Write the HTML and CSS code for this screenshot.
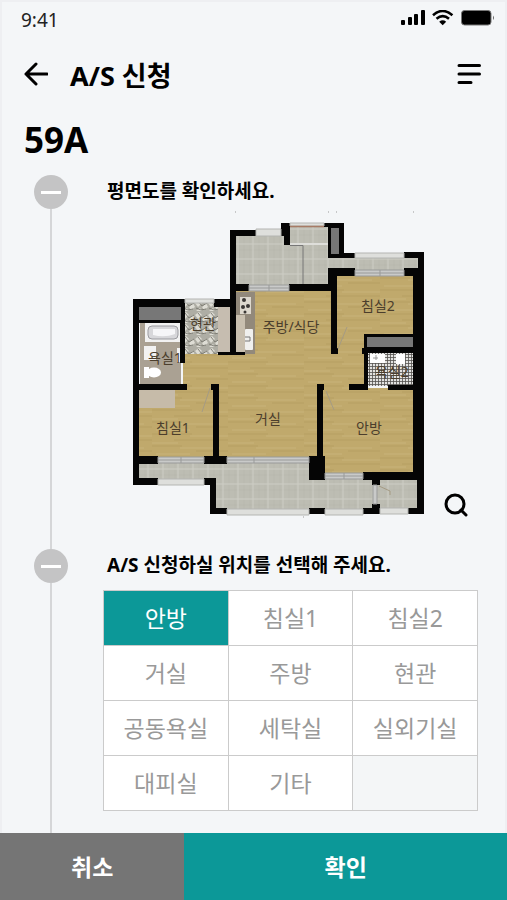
FILE: index.html
```html
<!DOCTYPE html>
<html lang="ko">
<head>
   <meta charset="UTF-8">
   <meta name="viewport" content="width=device-width, initial-scale=1">
   <title>A/S 신청</title>
   <link rel="stylesheet" href="styles.css">
</head>
<body>
   <div class="status">
      <span>9:41</span>
      <svg width="94" height="16" viewBox="401 10 94 16" aria-hidden="true">
         <rect x="401" y="20" width="4" height="5" rx="1"/>
         <rect x="408" y="17" width="4" height="8" rx="1"/>
         <rect x="414" y="14" width="4" height="11" rx="1"/>
         <rect x="421" y="10" width="4" height="15" rx="1"/>
         <g fill="none" stroke="#000" stroke-width="2.6">
            <path d="M433 15.2Q442.5 6.8 452.4 15.2"/>
            <path d="M436.5 18.8Q442.7 13.6 449 18.8"/>
         </g>
         <path d="M439.2 21.7Q442.7 19 446.2 21.7L442.7 25.2Z"/>
         <rect x="461.5" y="10.5" width="29.5" height="14.5" rx="3" fill="#000" stroke="#777"/>
         <path d="M493 15.5q2 2.3 0 4.6z" fill="#666"/>
      </svg>
   </div>

   <header>
      <a href="#" class="back" aria-label="뒤로">
         <svg width="24" height="24" viewBox="0 0 24 24"><path d="M23 12H2M12 2L2 12l10 10"/></svg>
      </a>
      <h1>A/S 신청</h1>
      <button type="button" class="menu" aria-label="메뉴">
         <svg width="24" height="24" viewBox="0 0 24 24"><path d="M2 3.5h20.5M2 12h20.5M2 20.5h12"/></svg>
      </button>
   </header>

   <main>
      <p class="type">59A</p>

      <section class="step">
         <div class="line"><button type="button" class="fold" aria-label="접기"></button></div>
         <div class="content">
            <h2>평면도를 확인하세요.</h2>
            <div class="plan">
               <svg viewBox="103 209 375 320" role="img" aria-label="59A 평면도">
                  <defs>
                     <pattern id="wood" width="76" height="24" patternUnits="userSpaceOnUse">
                        <rect width="76" height="24" fill="#c0a96c"/>
                        <path d="M0 2h40M22 8h54M0 14h30M44 19h32" stroke="#b7a062" stroke-width="1"/>
                        <path d="M38 4h38M0 11h26M28 16h40M4 22h34" stroke="#c9b47a" stroke-width="1"/>
                     </pattern>
                     <pattern id="tile" width="15" height="15" patternUnits="userSpaceOnUse">
                        <rect width="15" height="15" fill="#bdbdb3"/>
                        <path d="M4 0v15M10 0v15M0 10h15" stroke="#b3b4aa" stroke-width=".6"/>
                        <path d="M0 4h15M13 0v15" stroke="#cdcdc5" stroke-width="1"/>
                     </pattern>
                     <pattern id="marble" width="13" height="12" patternUnits="userSpaceOnUse">
                        <rect width="13" height="12" fill="#aeada4"/>
                        <path d="M0 3l4-3 3 3-4 4zM7 7l4-4 2 4-4 3zM1 11l4-3 2 3z" fill="#deddd5"/>
                        <path d="M3 1l4 5 5-3M1 8l5 2 5-1" fill="none" stroke="#77766e" stroke-width=".9"/>
                     </pattern>
                     <pattern id="mosaic" width="3" height="3" patternUnits="userSpaceOnUse">
                        <rect width="3" height="3" fill="#e3e3e1"/>
                        <path d="M0 .5h3M.5 0v3" stroke="#55534f" stroke-width=".8"/>
                     </pattern>
                  </defs>

                  <!-- floors -->
                  <path fill="url(#tile)" d="M235 235h55v-9h38v32h90v12h-90v16h-93zM138 462h79v-1h107v17h94v32H215v-31h-77z"/>
                  <path fill="url(#wood)" d="M236 290h96v-16h82v62h-49v52h49v86h-90v-16H138v-69h45v-35h53z"/>
                  <path fill="url(#marble)" d="M185 303h33v51h-33z"/>
                  <path fill="#c6bdb0" d="M218 307h12v46h-12z"/>
                  <path fill="#aaa193" d="M140 323h41v61h-41z"/>
                  <path fill="url(#mosaic)" d="M368 353h45v33h-45z"/>
                  <path fill="#c6bba9" d="M139 390h36v18h-36z"/>

                  <!-- bathroom 1 -->
                  <path fill="#f2f2f2" d="M145 323h36v19h-36zM144 346h12v14h-12zM177 348h4v14h-4z"/>
                  <rect x="148" y="326" width="30" height="13" rx="4" fill="#d7d7da" stroke="#9b9ba0" stroke-width="1"/>
                  <path d="M153 329h22v5q-10 4-22 1z" fill="#f6f6f8"/>
                  <rect x="144" y="367" width="5" height="11" fill="#fff"/>
                  <ellipse cx="154" cy="372.5" rx="7" ry="5" fill="#fff"/>
                  <!-- bathroom 2 -->
                  <path fill="#fff" d="M370 354h15v9h-15zM396 354h9v10h-9z"/>
                  <path d="M376 355v5M373 358h5" stroke="#999" stroke-width="1"/>

                  <!-- kitchen -->
                  <path fill="#92897b" d="M236 292h19v62h-19z"/>
                  <path fill="#c8bfaf" d="M236 315h9v38h-9z"/>
                  <rect x="240" y="297" width="11" height="17" fill="#ddd8ce"/>
                  <g fill="#3a3735"><circle cx="244" cy="300" r="2"/><circle cx="243" cy="307" r="2"/><circle cx="248" cy="306" r="2"/><circle cx="245" cy="312" r="1.5"/></g>
                  <rect x="245" y="329" width="8" height="21" rx="1" fill="#f0f0ee"/>
                  <path d="M245 337h5v4h-5" fill="none" stroke="#777" stroke-width="1"/>

                  <!-- walls -->
                  <g fill="#050505">
                     <path d="M230 230h26v6h-20v48h13v7h-13v64h-6v-48h-16v-8h16z"/>
                     <path d="M281 230v-7h9v22h-6v-9h-3zM324 223h20v30h11v5h-27v-31h-4z"/>
                     <path d="M404 252h20v262h-16v-6h9v-28h-37v5h-8v-5h-9v-8h50V276h-9v-8h14v-10h-14z"/>
                     <path d="M289 284h39v-16h27v8h-18v72h1v6h-7v-63h-42z"/>
                     <path d="M364 334h49v19h-45v37h-19v-6h15v-30h-2v-6h2zM388 385h25v5h-25z"/>
                     <path d="M133 299h52v64h-5v-40h-41v61h48v6h-48v66h19v8h-19v14h19v7h-25z"/>
                     <path d="M211 384h8v72h8v8h-23v-8h9v-66h-2zM204 478h12v30h11v6h-17v-29h-6z"/>
                     <path d="M317 384h7v6h-1v66h2v24h-16v-24h8zM309 508h16v6h-16zM363 508h9v-4h8v10h-17z"/>
                     <path d="M218 352h27v3h-27z"/>
                  </g>
                  <g fill="#777">
                     <path d="M139 307h42v13h-42zM331 228h8v26h-8zM367 337h46v10h-46z"/>
                  </g>

                  <!-- windows -->
                  <g fill="#dedfdc" stroke="#b4b5b2" stroke-width="1">
                     <path d="M256 229h25v7h-25zM355 253h49v5h-49zM158 479h46v6h-46zM227 509h82v6h-82zM325 509h38v6h-38zM380 508h28v6h-28zM185 299h29v4h-29zM290 223h34v3h-34z"/>
                  </g>
                  <g fill="#c9cac9" stroke="#999a99" stroke-width="1">
                     <path d="M249 285h40v6h-40zM249 288h40M269 285v6M355 270h49v6h-49zM355 273h49M380 270v6M158 457h46v6h-46zM158 460h46M181 457v6M227 457h82v6h-82zM227 460h82M254 457v6M325 473h38v6h-38zM325 476h38M344 473v6M373 485h4v19h-4z"/>
                  </g>
                  <path d="M290 226.5h34" stroke="#a77b66" stroke-width="1.5"/>
                  <path d="M290 244h38" stroke="#dededa" stroke-width="2"/>
                  <path d="M290 245.5h13v38.5" fill="none" stroke="#777" stroke-width="1"/>
                  <path d="M347 327l-9 22M210 388l-8 24M326 391l8 19M379 486l11 5v4" fill="none" stroke="#a59b84" stroke-width="1"/>
                  <path d="M235 212h1M328 212h1M336 212h1M413 212h1M303 517h1" stroke="#999" stroke-width="1"/>

                  <g class="rooms">
                     <text x="378" y="311">침실2</text>
                     <text x="291" y="332">주방/식당</text>
                     <text x="203" y="329">현관</text>
                     <text x="165" y="363">욕실1</text>
                     <text x="392" y="377">욕실2</text>
                     <text x="268" y="424">거실</text>
                     <text x="173" y="433">침실1</text>
                     <text x="369" y="433">안방</text>
                  </g>
               </svg>
               <button type="button" class="zoom" aria-label="확대">
                  <svg width="24" height="24" viewBox="0 0 24 24"><circle cx="11" cy="11" r="9"/><path d="M17 17l5 5"/></svg>
               </button>
            </div>
         </div>
      </section>

      <section class="step">
         <div class="line"><button type="button" class="fold" aria-label="접기"></button></div>
         <div class="content">
            <h2>A/S 신청하실 위치를 선택해 주세요.</h2>
            <div class="places">
               <button type="button" class="on">안방</button>
               <button type="button">침실1</button>
               <button type="button">침실2</button>
               <button type="button">거실</button>
               <button type="button">주방</button>
               <button type="button">현관</button>
               <button type="button">공동욕실</button>
               <button type="button">세탁실</button>
               <button type="button">실외기실</button>
               <button type="button">대피실</button>
               <button type="button">기타</button>
               <span class="empty"></span>
            </div>
         </div>
      </section>
   </main>

   <footer>
      <button type="button" class="cancel">취소</button>
      <button type="button" class="ok">확인</button>
   </footer>
</body>
</html>
```
FILE: styles.css
```css
* {
   box-sizing: border-box;
}
body {
   margin: 0;
   min-height: 100vh;
   display: flex;
   flex-direction: column;
   color: black;
   background: #f4f6f8;
   box-shadow: inset 0 0 0 2px #eeeff2;
   font-family: "Noto Sans", "Noto Sans CJK KR", sans-serif;
}
button {
   padding: 0;
   border: none;
   background: none;
   font-family: inherit;
   cursor: pointer;
}
svg {
   display: block;
}

.status {
   height: 40px;
   padding: 0 12px 4px 21px;
   display: flex;
   justify-content: space-between;
   align-items: center;
   font-size: 19px;
   line-height: 30px;
   color: #222;
}
.status span {
   padding-top: 3px;
}

header {
   height: 68px;
   padding: 0 26px 0 24px;
   display: flex;
   align-items: center;
}
h1 {
   flex: 1;
   margin: 0 0 0 22px;
   padding-top: 3px;
   font-size: 27px;
   line-height: 40px;
   font-weight: bold;
}
.back svg,
.menu svg,
.zoom svg {
   fill: none;
   stroke: black;
   stroke-width: 3;
   stroke-linecap: round;
   stroke-linejoin: round;
}

main {
   flex: 1;
   display: flex;
   flex-direction: column;
}
.type {
   margin: 0;
   padding: 8px 24px 11px;
   font-size: 35px;
   line-height: 48px;
   font-weight: bold;
}

.step {
   display: flex;
   gap: 35px;
   padding: 0 29px 0 34px;
}
.step:last-child {
   flex: 1;
}
.line {
   width: 34px;
   display: flex;
   flex-direction: column;
   align-items: center;
}
.line:after {
   content: "";
   flex: 1;
   width: 2px;
   background: #d5d6d8;
}
.fold {
   width: 34px;
   height: 34px;
   display: flex;
   justify-content: center;
   align-items: center;
   border-radius: 50%;
   background: #c4c4c5;
}
.fold:after {
   content: "";
   width: 20px;
   height: 3px;
   background: white;
}
.content {
   flex: 1;
   min-width: 0;
}
h2 {
   margin: 0 0 0 4px;
   font-size: 19px;
   line-height: 32px;
   font-weight: bold;
}

.plan {
   position: relative;
   padding: 2px 0 20px;
}
.rooms {
   font-size: 14px;
   fill: #4b3e2c;
   text-anchor: middle;
}
.zoom {
   position: absolute;
   right: 10px;
   bottom: 32px;
}

.places {
   margin: 9px 0 22px;
   display: grid;
   grid-template-columns: repeat(3, 1fr);
   grid-auto-rows: 54px;
   gap: 1px;
   padding: 1px;
   background: #cbcbcb;
}
.places button {
   padding-bottom: 3px;
   font-size: 23px;
   color: #999;
   background: white;
}
.places .on {
   color: white;
   background: #0c9898;
}
.empty {
   background: #f4f6f7;
}

footer {
   display: flex;
}
footer button {
   height: 67px;
   padding-bottom: 2px;
   font-size: 23px;
   font-weight: bold;
   color: white;
}
.cancel {
   flex: 4;
   background: #757575;
}
.ok {
   flex: 7;
   background: #0c9898;
}
```
